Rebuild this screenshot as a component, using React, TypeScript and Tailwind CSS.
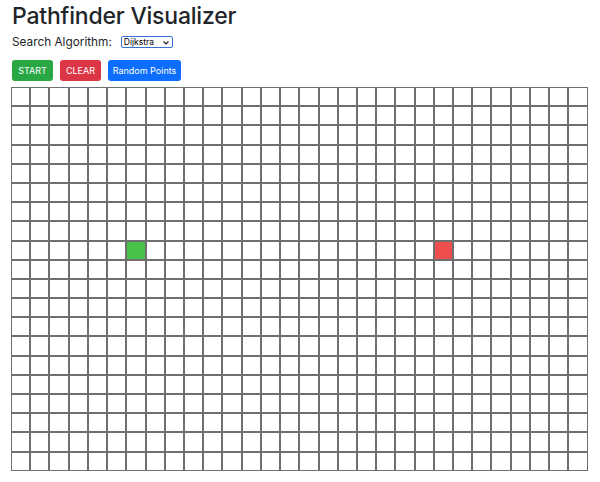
import React from "react";

const ROWS = 20;
const COLS = 30;

export default function App() {
  const cells = [];
  for (let r = 0; r < ROWS; r++) {
    for (let c = 0; c < COLS; c++) {
      const isStart = r === 8 && c === 6;
      const isEnd = r === 8 && c === 22;
      cells.push(
        <div
          key={`${r}-${c}`}
          className={
            "border border-[#6f6f6f] " +
            (isStart ? "bg-[#48c148]" : isEnd ? "bg-[#ef4e4e]" : "bg-white")
          }
        />
      );
    }
  }
  return (
    <div
      className="min-h-[482px] w-[600px] bg-white pl-[11px] text-[#212529]"
      style={{ fontFamily: 'Inter, "Liberation Sans", Arial, sans-serif' }}
    >
      <h1 className="pl-[1px] pt-[2px] text-[23px] leading-[28px] font-medium tracking-[-0.2px]">Pathfinder Visualizer</h1>
      <div className="mt-[2px] flex items-center pl-[1px] h-[20px]">
        <span className="text-[11.8px] leading-[16px]">Search Algorithm:</span>
        <div className="ml-[9px] flex h-[12px] w-[52px] items-center justify-between rounded-[2px] border border-[#3b6fd6] bg-white pl-[2px] pr-[3px]">
          <span className="text-[8.5px] leading-[10px] text-black">Dijkstra</span>
          <svg width="6" height="4" viewBox="0 0 6 4" className="mt-[1px]">
            <path d="M0.5 0.5 L3 3 L5.5 0.5" fill="none" stroke="#222" strokeWidth="1.2" />
          </svg>
        </div>
      </div>
      <div className="mt-[8px] flex gap-[7px] pl-[1px]">
        <button className="h-[21px] w-[41px] rounded-[3px] bg-[#28a745] text-[9px] text-white">START</button>
        <button className="h-[21px] w-[41px] rounded-[3px] bg-[#dc3545] text-[9px] text-white">CLEAR</button>
        <button className="h-[21px] w-[73px] rounded-[3px] bg-[#0d6efd] text-[9px] text-white">Random Points</button>
      </div>
      <div className="mt-[6px] grid grid-cols-[repeat(30,19.23px)] grid-rows-[repeat(20,19.2px)]">
        {cells}
      </div>
    </div>
  );
}
